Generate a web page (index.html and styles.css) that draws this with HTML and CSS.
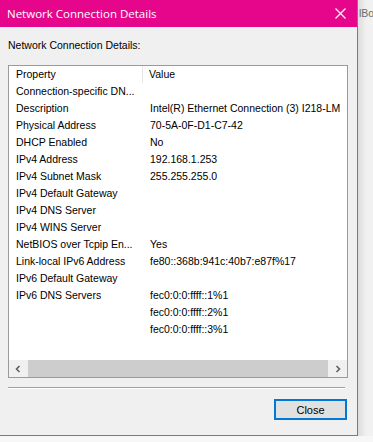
FILE: index.html
```html
<!DOCTYPE html>
<html lang="en">
<head>
  <meta charset="UTF-8">
  <title>Network Connection Details</title>
  <link rel="stylesheet" href="styles.css">
</head>
<body>
  <div class="screen">
    <div class="dialog">
      <div class="title-bar">
        <span class="title">Network Connection Details</span>
        <svg class="close-x" width="11" height="11" viewBox="0 0 11 11">
          <path d="M0.5 0.5 L10.5 10.5 M10.5 0.5 L0.5 10.5" stroke="#fff" stroke-width="1.2" fill="none"/>
        </svg>
      </div>

      <div class="dialog-body">
        <div class="label">Network Connection Details:</div>

        <div class="listview">
          <div class="list-header">
            <div class="col col-name">Property</div>
            <div class="col col-value">Value</div>
          </div>
          <div class="list-rows" id="rows"></div>
          <div class="hscroll">
            <div class="arrow">
              <svg width="8" height="8" viewBox="0 0 8 8"><path d="M5.5 1 L2.5 4 L5.5 7" stroke="#606060" stroke-width="1.6" fill="none"/></svg>
            </div>
            <div class="thumb"></div>
            <div class="arrow">
              <svg width="8" height="8" viewBox="0 0 8 8"><path d="M2.5 1 L5.5 4 L2.5 7" stroke="#606060" stroke-width="1.6" fill="none"/></svg>
            </div>
          </div>
        </div>

        <div class="separator"></div>

        <div class="button-row">
          <button class="btn">Close</button>
        </div>
      </div>
    </div>

    <div class="backdrop">lBo</div>
  </div>

  <script>
    const details = [
      ['Connection-specific DN...', ''],
      ['Description', 'Intel(R) Ethernet Connection (3) I218-LM'],
      ['Physical Address', '70-5A-0F-D1-C7-42'],
      ['DHCP Enabled', 'No'],
      ['IPv4 Address', '192.168.1.253'],
      ['IPv4 Subnet Mask', '255.255.255.0'],
      ['IPv4 Default Gateway', ''],
      ['IPv4 DNS Server', ''],
      ['IPv4 WINS Server', ''],
      ['NetBIOS over Tcpip En...', 'Yes'],
      ['Link-local IPv6 Address', 'fe80::368b:941c:40b7:e87f%17'],
      ['IPv6 Default Gateway', ''],
      ['IPv6 DNS Servers', 'fec0:0:0:ffff::1%1'],
      ['', 'fec0:0:0:ffff::2%1'],
      ['', 'fec0:0:0:ffff::3%1']
    ];

    const rows = document.getElementById('rows');
    details.forEach(([name, value]) => {
      const row = document.createElement('div');
      row.classList.add('row');

      const nameCell = document.createElement('div');
      nameCell.classList.add('col', 'col-name');
      nameCell.textContent = name;

      const valueCell = document.createElement('div');
      valueCell.classList.add('col', 'col-value');
      valueCell.textContent = value;

      row.appendChild(nameCell);
      row.appendChild(valueCell);
      rows.appendChild(row);
    });
  </script>
</body>
</html>
```

FILE: styles.css
```css
* {
  margin: 0;
  padding: 0;
  box-sizing: border-box;
}

body {
  font-family: 'Liberation Sans', Arial, sans-serif;
  font-size: 10.5px;
  color: #000;
  background: #f7f7f7;
  width: 373px;
  height: 442px;
  overflow: hidden;
}

.screen {
  display: flex;
  height: 436px;
}

.dialog {
  width: 358px;
  height: 436px;
  display: flex;
  flex-direction: column;
  background-color: #f0f0f0;
  border-right: 1px solid #d4479c;
  border-bottom: 1px solid #d4479c;
}

.title-bar {
  height: 27px;
  flex-shrink: 0;
  background-color: #e5068c;
  color: #fff;
  display: flex;
  align-items: center;
  justify-content: space-between;
  padding: 0 11px 0 7px;
}

.title-bar .title {
  font-family: 'Open Sans', sans-serif;
  font-size: 11.5px;
  margin-top: -1px;
}

.close-x {
  margin-top: -1px;
}

.dialog-body {
  flex-grow: 1;
  display: flex;
  flex-direction: column;
  padding: 0 10px 0 8px;
}

.label {
  height: 38px;
  padding-top: 12px;
  line-height: 13px;
}

.listview {
  width: 340px;
  height: 313px;
  border: 1px solid #9a9a9a;
  background-color: #fff;
  display: flex;
  flex-direction: column;
}

.list-header,
.row {
  display: grid;
  grid-template-columns: 134px 1fr;
  height: 17px;
  line-height: 17px;
  white-space: nowrap;
}

.list-header .col-name {
  border-right: 1px solid #e5e5e5;
}

.col {
  padding-left: 7px;
  overflow: hidden;
}

.list-header .col-value {
  padding-left: 6px;
}

.list-rows {
  flex-grow: 1;
}

.hscroll {
  height: 17px;
  display: flex;
  background-color: #f0f0f0;
}

.hscroll .arrow {
  width: 18px;
  display: flex;
  align-items: center;
  justify-content: center;
}

.hscroll .thumb {
  flex-grow: 1;
  margin: 0 1px;
  background-color: #cdcdcd;
}

.separator {
  margin-top: 9px;
  width: 337px;
  height: 1px;
  background-color: #a0a0a0;
  border-bottom: 1px solid #fff;
  box-sizing: content-box;
}

.button-row {
  display: flex;
  justify-content: flex-end;
  padding-top: 10px;
}

.btn {
  width: 73px;
  height: 21px;
  font-family: 'Liberation Sans', Arial, sans-serif;
  font-size: 11px;
  background-color: #e1e1e1;
  border: 2px solid #0078d7;
  color: #000;
}

.backdrop {
  flex-grow: 1;
  background: linear-gradient(to right, #dcdcdc, #f0f0f0 8px, #f2f2f2);
  color: #6b6b6b;
  font-size: 10.5px;
  padding: 7px 0 0 1px;
  overflow: hidden;
  white-space: nowrap;
}
```
